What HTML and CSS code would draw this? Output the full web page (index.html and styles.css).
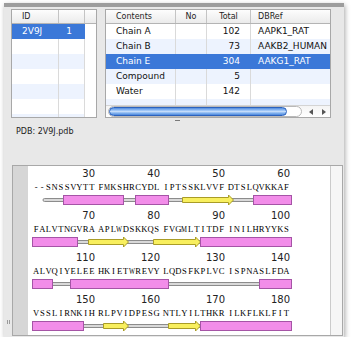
FILE: index.html
```html
<!DOCTYPE html>
<html lang="en">
<head>
    <meta charset="UTF-8">
    <title>Structure Chooser</title>
    <link rel="stylesheet" href="styles.css">
</head>
<body>
    <div class="window">
        <div class="titlebar"></div>

        <div class="tables">
            <!-- PDB entries -->
            <div class="table left-table">
                <div class="thead">
                    <span>ID</span><span></span><span></span>
                </div>
                <div class="tbody">
                    <div class="row selected"><span>2V9J</span><span class="num">1</span><span class="blank"></span></div>
                    <div class="row"><span></span><span></span><span class="blank"></span></div>
                    <div class="row stripe"><span></span><span></span><span class="blank"></span></div>
                    <div class="row"><span></span><span></span><span class="blank"></span></div>
                    <div class="row stripe"><span></span><span></span><span class="blank"></span></div>
                    <div class="row"><span></span><span></span><span class="blank"></span></div>
                    <div class="row stripe"><span></span><span></span><span class="blank"></span></div>
                </div>
            </div>

            <!-- Chains of the selected entry -->
            <div class="table right-table">
                <div class="thead">
                    <span>Contents</span><span class="mid">No</span><span class="mid">Total</span><span class="ref">DBRef</span>
                </div>
                <div class="tbody">
                    <div class="row"><span>Chain A</span><span></span><span class="num">102</span><span class="ref">AAPK1_RAT</span></div>
                    <div class="row stripe"><span>Chain B</span><span></span><span class="num">73</span><span class="ref">AAKB2_HUMAN</span></div>
                    <div class="row selected"><span>Chain E</span><span></span><span class="num">304</span><span class="ref">AAKG1_RAT</span></div>
                    <div class="row stripe"><span>Compound</span><span></span><span class="num">5</span><span class="ref"></span></div>
                    <div class="row"><span>Water</span><span></span><span class="num">142</span><span class="ref"></span></div>
                    <div class="row stripe"><span></span><span></span><span class="num"></span><span class="ref"></span></div>
                </div>
                <div class="hscroll">
                    <div class="track"><div class="thumb"></div></div>
                    <div class="arrows"><span class="arrow-left"></span><span class="arrow-right"></span></div>
                </div>
            </div>
        </div>

        <div class="splitter"><span></span></div>
        <div class="pdb-label">PDB: 2V9J.pdb</div>

        <div class="seq-panel">
            <div class="gutter"></div>
            <div class="seq-view">
                <div class="seq-row">
                    <div class="nums"><span>30</span><span>40</span><span>50</span><span>60</span></div>
                    <div class="seq">
                        <span class="blk"><i>-</i><i>-</i><i>S</i><i>N</i><i>S</i><i>S</i><i>V</i><i>Y</i><i>T</i><i>T</i></span>
                        <span class="blk"><i>F</i><i class="wide">M</i><i>K</i><i>S</i><i>H</i><i>R</i><i>C</i><i>Y</i><i>D</i><i>L</i></span>
                        <span class="blk"><i>I</i><i>P</i><i>T</i><i>S</i><i>S</i><i>K</i><i>L</i><i>V</i><i>V</i><i>F</i></span>
                        <span class="blk"><i>D</i><i>T</i><i>S</i><i>L</i><i>Q</i><i>V</i><i>K</i><i>K</i><i>A</i><i>F</i></span>
                    </div>
                    <svg width="305" height="12" viewBox="0 0 305 12">
                        <rect class="coil" x="15" y="4.5" width="248" height="3" rx="1.5"/>
                        <rect class="helix" x="35.5" y="1.5" width="60" height="9"/>
                        <rect class="helix" x="107.5" y="1.5" width="33" height="9"/>
                        <path class="strand" d="M154.5 3.5h46v-2.5l5 5-5 5v-2.5h-46z"/>
                        <rect class="helix" x="225.5" y="1.5" width="38" height="9"/>
                    </svg>
                </div>

                <div class="seq-row">
                    <div class="nums"><span>70</span><span>80</span><span>90</span><span>100</span></div>
                    <div class="seq">
                        <span class="blk"><i>F</i><i>A</i><i>L</i><i>V</i><i>T</i><i>N</i><i>G</i><i>V</i><i>R</i><i>A</i></span>
                        <span class="blk"><i>A</i><i>P</i><i>L</i><i class="wider">W</i><i>D</i><i>S</i><i>K</i><i>K</i><i>Q</i><i>S</i></span>
                        <span class="blk"><i>F</i><i>V</i><i>G</i><i class="wide">M</i><i>L</i><i>T</i><i>I</i><i>T</i><i>D</i><i>F</i></span>
                        <span class="blk"><i>I</i><i>N</i><i>I</i><i>L</i><i>H</i><i>R</i><i>Y</i><i>Y</i><i>K</i><i>S</i></span>
                    </div>
                    <svg width="305" height="12" viewBox="0 0 305 12">
                        <rect class="coil" x="5" y="4.5" width="258" height="3" rx="1.5"/>
                        <rect class="helix" x="4.5" y="1.5" width="45" height="9"/>
                        <path class="strand" d="M60.5 3.5h35v-2.5l5 5-5 5v-2.5h-35z"/>
                        <path class="strand" d="M125.5 3.5h42v-2.5l5 5-5 5v-2.5h-42z"/>
                        <rect class="helix" x="172.5" y="1.5" width="91" height="9"/>
                    </svg>
                </div>

                <div class="seq-row">
                    <div class="nums"><span>110</span><span>120</span><span>130</span><span>140</span></div>
                    <div class="seq">
                        <span class="blk"><i>A</i><i>L</i><i>V</i><i>Q</i><i>I</i><i>Y</i><i>E</i><i>L</i><i>E</i><i>E</i></span>
                        <span class="blk"><i>H</i><i>K</i><i>I</i><i>E</i><i>T</i><i class="wider">W</i><i>R</i><i>E</i><i>V</i><i>Y</i></span>
                        <span class="blk"><i>L</i><i>Q</i><i>D</i><i>S</i><i>F</i><i>K</i><i>P</i><i>L</i><i>V</i><i>C</i></span>
                        <span class="blk"><i>I</i><i>S</i><i>P</i><i>N</i><i>A</i><i>S</i><i>L</i><i>F</i><i>D</i><i>A</i></span>
                    </div>
                    <svg width="305" height="12" viewBox="0 0 305 12">
                        <rect class="coil" x="5" y="4.5" width="258" height="3" rx="1.5"/>
                        <rect class="helix" x="4.5" y="1.5" width="20" height="9"/>
                        <rect class="helix" x="42.5" y="1.5" width="98" height="9"/>
                        <rect class="helix" x="231.5" y="1.5" width="32" height="9"/>
                    </svg>
                </div>

                <div class="seq-row">
                    <div class="nums"><span>150</span><span>160</span><span>170</span><span>180</span></div>
                    <div class="seq">
                        <span class="blk"><i>V</i><i>S</i><i>S</i><i>L</i><i>I</i><i>R</i><i>N</i><i>K</i><i>I</i><i>H</i></span>
                        <span class="blk"><i>R</i><i>L</i><i>P</i><i>V</i><i>I</i><i>D</i><i>P</i><i>E</i><i>S</i><i>G</i></span>
                        <span class="blk"><i>N</i><i>T</i><i>L</i><i>Y</i><i>I</i><i>L</i><i>T</i><i>H</i><i>K</i><i>R</i></span>
                        <span class="blk"><i>I</i><i>L</i><i>K</i><i>F</i><i>L</i><i>K</i><i>L</i><i>F</i><i>I</i><i>T</i></span>
                    </div>
                    <svg width="305" height="12" viewBox="0 0 305 12">
                        <rect class="coil" x="5" y="4.5" width="258" height="3" rx="1.5"/>
                        <rect class="helix" x="4.5" y="1.5" width="51" height="9"/>
                        <path class="strand" d="M75.5 3.5h20v-2.5l5 5-5 5v-2.5h-20z"/>
                        <path class="strand" d="M140.5 3.5h27v-2.5l5 5-5 5v-2.5h-27z"/>
                        <rect class="helix" x="172.5" y="1.5" width="91" height="9"/>
                    </svg>
                </div>
            </div>
            <div class="vscroll"></div>
        </div>

        <div class="grip"></div>
    </div>
</body>
</html>
```

FILE: styles.css
```css
body {
    margin: 0;
    background: #fff;
    font-family: "DejaVu Sans", Verdana, sans-serif;
    color: #111;
}

.window {
    position: relative;
    width: 340px;
    height: 334px;
    margin: 3px 0 0 4px;
    background: #e8e8e8;
    box-shadow: 1px 2px 5px rgba(0, 0, 0, 0.35);
}

.titlebar {
    height: 4px;
    background: #9d9d9d;
}

/* Upper tables */
.tables {
    display: flex;
    gap: 8px;
    padding: 2px 0 0 7px;
}

.table {
    height: 109px;
    box-sizing: border-box;
    border: 1px solid #a8a8a8;
    background: #fff;
    overflow: hidden;
}

.left-table {
    width: 86px;
}

.right-table {
    width: 226px;
    display: flex;
    flex-direction: column;
}

.thead,
.row {
    display: grid;
}

.left-table .thead,
.left-table .row {
    grid-template-columns: 47px 26px 11px;
}

.right-table .thead,
.right-table .row {
    grid-template-columns: 70px 31px 44px 79px;
}

.thead {
    height: 14px;
    box-sizing: border-box;
    border-bottom: 1px solid #b4b4b4;
    background: linear-gradient(#fdfdfd, #ebebeb);
    font-size: 8px;
    line-height: 13px;
    color: #1e1e1e;
}

.thead span {
    padding-left: 10px;
    border-right: 1px solid #c4c4c4;
}

.thead span:last-child {
    border-right: none;
}

.thead .mid {
    padding-left: 0;
    text-align: center;
}

.thead .ref,
.row .ref {
    padding-left: 7px;
}

.tbody {
    flex: 1;
    overflow: hidden;
}

.row {
    height: 15px;
    font-size: 9px;
    line-height: 15px;
    white-space: nowrap;
}

.row span {
    padding-left: 10px;
    border-right: 1px solid #dadada;
}

.row span:last-child {
    border-right: none;
}

.row .num {
    padding: 0 10px 0 0;
    text-align: right;
}

.left-table .row .num {
    padding-right: 12px;
}

.row .blank {
    background: #fff;
}

.stripe {
    background: #edf3fe;
}

.selected {
    background: #3b78d8;
    color: #fff;
}

.selected span {
    border-right-color: #3b78d8;
}

/* Horizontal scroll bar of the chains table */
.hscroll {
    display: flex;
    height: 12px;
    border-top: 1px solid #d4d4d4;
    box-sizing: border-box;
    background: linear-gradient(#f4f4f4, #ffffff);
}

.track {
    flex: 1;
    margin: 0 2px 0 2px;
    border: 1px solid #b9b9b9;
    border-radius: 6px;
    background: #fff;
}

.thumb {
    width: 178px;
    height: 100%;
    box-sizing: border-box;
    border: 1px solid #2b62bd;
    border-radius: 6px;
    background: linear-gradient(#4f8be0, #9ec5f6 35%, #c4dcfa 50%, #8ab8f1 70%, #4a86dc);
}

.arrows {
    display: flex;
    width: 26px;
    align-items: center;
    justify-content: space-around;
}

.arrow-left,
.arrow-right {
    width: 0;
    height: 0;
    border-top: 3px solid transparent;
    border-bottom: 3px solid transparent;
}

.arrow-left {
    border-right: 4px solid #555;
}

.arrow-right {
    border-left: 4px solid #555;
}

/* Split pane divider and label */
.splitter {
    height: 6px;
}

.splitter span {
    display: block;
    width: 5px;
    height: 1px;
    margin: 2px 0 0 171px;
    background: #7a7a7a;
}

.pdb-label {
    padding-left: 12px;
    font-size: 8px;
    line-height: 12px;
    color: #222;
}

/* Sequence with secondary structure */
.seq-panel {
    display: flex;
    width: 331px;
    height: 171px;
    margin: 27px 0 0 8px;
    box-sizing: border-box;
    border: 1px solid #a8a8a8;
    background: #fff;
}

.gutter {
    width: 15px;
    background: #d6d6d6;
}

.seq-view {
    flex: 1;
    padding: 2px 0 0 5px;
    overflow: hidden;
}

.vscroll {
    width: 11px;
    border-left: 1px solid #cbcbcb;
    background: #f6f6f6;
}

.seq-row {
    height: 42px;
}

.nums,
.seq {
    display: flex;
    gap: 3px;
}

.nums {
    height: 12px;
    font-size: 10px;
    line-height: 12px;
    color: #222;
}

.nums span {
    width: 62px;
    text-align: right;
}

.seq {
    height: 14px;
    font-family: "Liberation Serif", "Times New Roman", serif;
    font-size: 8.6px;
    line-height: 14px;
    color: #000;
}

.blk {
    display: flex;
}

.blk i {
    width: 6.2px;
    font-style: normal;
    text-align: center;
}

/* M and W are wider than a residue cell: squeeze them in */
.blk .wide {
    transform: scaleX(0.78);
    transform-origin: left center;
}

.blk .wider {
    transform: scaleX(0.74);
    transform-origin: left center;
}

.seq-row svg {
    display: block;
    margin-left: -5px;
}

.coil {
    fill: #d9d9d9;
    stroke: #8c8c8c;
    stroke-width: 1;
}

.helix {
    fill: #f28de9;
    stroke: #a554a6;
    stroke-width: 1;
}

.strand {
    fill: #f8ef5e;
    stroke: #a99c27;
    stroke-width: 1;
}

.grip {
    position: absolute;
    left: 3px;
    top: 317px;
    width: 1px;
    height: 4px;
    border-left: 1px solid #9a9a9a;
    border-right: 1px solid #9a9a9a;
}
```
